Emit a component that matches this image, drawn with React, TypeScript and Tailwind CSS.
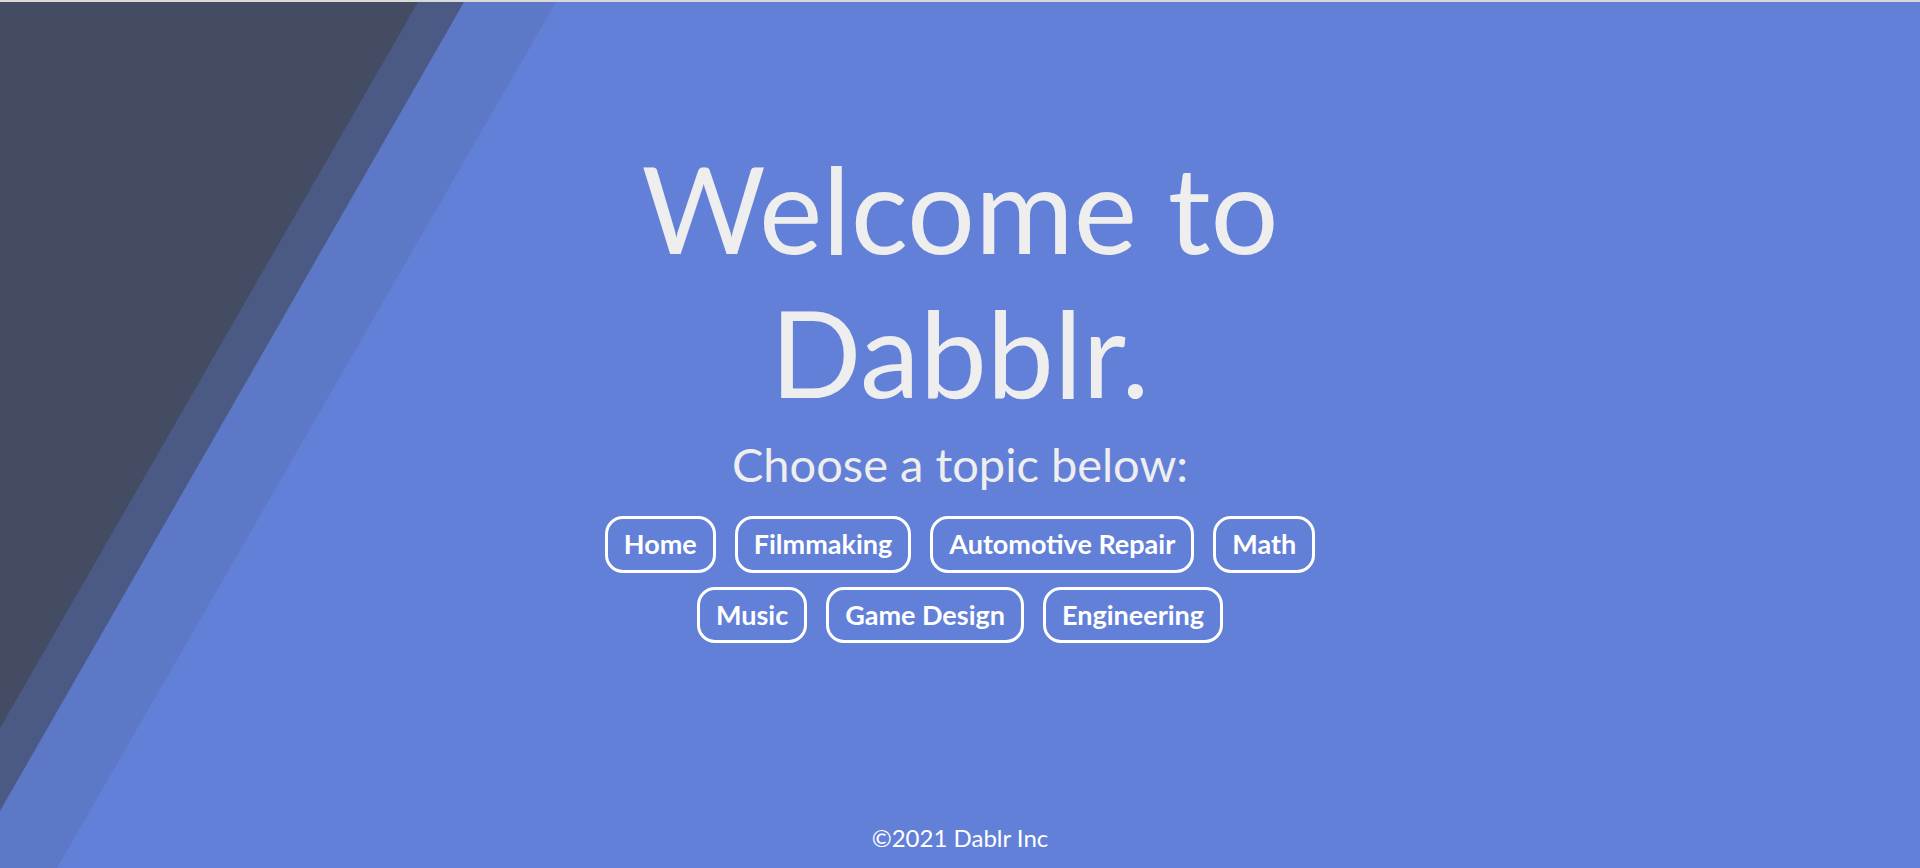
import React from "react";

const rowOne = ["Home", "Filmmaking", "Automotive Repair", "Math"];
const rowTwo = ["Music", "Game Design", "Engineering"];

function TopicButton({ label }: { label: string }) {
  return (
    <button className="border-[3px] border-white rounded-[18px] px-[16px] py-[9px] text-[27px] leading-[1.2] font-bold text-white bg-transparent">
      {label}
    </button>
  );
}

export default function App() {
  return (
    <div className="relative h-[868px] w-full overflow-hidden bg-[#6380d8] font-['Lato',sans-serif] border-t-2 border-[#d9d9d9]">
      {/* Background stripes */}
      <svg
        className="absolute inset-0 h-full w-full"
        viewBox="0 0 1920 866"
        preserveAspectRatio="none"
      >
        <polygon points="0,0 556,0 57,866 0,866" fill="#5d78c6" />
        <polygon points="0,0 464,0 0,809" fill="#4b5a85" />
        <polygon points="0,0 418,0 0,726" fill="#434c63" />
      </svg>

      <div className="relative flex h-full flex-col items-center">
        {/* Hero */}
        <h1 className="mt-[134px] max-w-[800px] text-center text-[120px] leading-[1.2] font-normal text-[#eeeeee]">
          Welcome to Dabblr.
        </h1>
        <p className="mt-[12px] text-[47px] leading-[1.2] text-[#eeeeee]">
          Choose a topic below:
        </p>

        {/* Topics */}
        <div className="mt-[24px] flex flex-col items-center gap-[14px]">
          <div className="flex gap-[19px]">
            {rowOne.map((t) => (
              <TopicButton key={t} label={t} />
            ))}
          </div>
          <div className="flex gap-[19px]">
            {rowTwo.map((t) => (
              <TopicButton key={t} label={t} />
            ))}
          </div>
        </div>

        {/* Footer */}
        <footer className="mt-auto mb-[15px] text-[24px] leading-[1.2] text-white">
          ©2021 Dablr Inc
        </footer>
      </div>
    </div>
  );
}
